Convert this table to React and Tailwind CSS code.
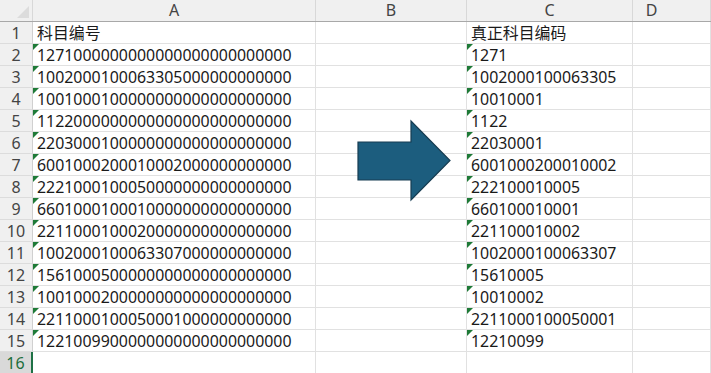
import React from "react";

const rowsA = [
  "科目编号",
  "1271000000000000000000000000",
  "1002000100063305000000000000",
  "1001000100000000000000000000",
  "1122000000000000000000000000",
  "2203000100000000000000000000",
  "6001000200010002000000000000",
  "2221000100050000000000000000",
  "6601000100010000000000000000",
  "2211000100020000000000000000",
  "1002000100063307000000000000",
  "1561000500000000000000000000",
  "1001000200000000000000000000",
  "2211000100050001000000000000",
  "1221009900000000000000000000",
  "",
];

const rowsC = [
  "真正科目编码",
  "1271",
  "1002000100063305",
  "10010001",
  "1122",
  "22030001",
  "6001000200010002",
  "222100010005",
  "660100010001",
  "221100010002",
  "1002000100063307",
  "15610005",
  "10010002",
  "2211000100050001",
  "12210099",
  "",
];

const cols = "grid-cols-[33px_283px_151px_166px_1fr]";

function Cell({ text, flag }) {
  return (
    <div className="relative h-[22px] border-r border-b border-[#e1e1e1] pl-[4px] leading-[22px] whitespace-nowrap overflow-hidden text-[#1a1a1a]">
      {flag && (
        <span className="absolute left-0 top-0 w-0 h-0 border-t-[6px] border-r-[6px] border-t-[#1e7a37] border-r-transparent" />
      )}
      {text}
    </div>
  );
}

export default function App() {
  return (
    <div
      className="relative w-[711px] h-[373px] overflow-hidden bg-white"
      style={{ fontFamily: '"Noto Sans", "Noto Sans CJK SC", sans-serif' }}
    >
      <div className={`grid ${cols} h-[22px] bg-[#f0f0f0] border-b border-[#a8a8a8] text-[16px] text-[#444] leading-[21px]`}>
        <div className="relative border-r border-[#d8d8d8]">
          <svg className="absolute right-[3px] bottom-[3px]" width="12" height="12">
            <polygon points="12,0 12,12 0,12" fill="#dcdcdc" />
          </svg>
        </div>
        <div className="text-center border-r border-[#d8d8d8]">A</div>
        <div className="text-center border-r border-[#d8d8d8]">B</div>
        <div className="text-center border-r border-[#d8d8d8]">C</div>
        <div className="text-center border-r border-[#d8d8d8] pr-[40px]">D</div>
      </div>
      {rowsA.map((a, i) => {
        const n = i + 1;
        const active = n === 16;
        const flag = n > 1 && n < 16;
        return (
          <div key={n} className={`grid ${cols} text-[15.9px]`}>
            <div
              className={`h-[22px] border-b text-center leading-[22px] text-[16px] ${
                active
                  ? "bg-[#d9d9d9] text-[#1e6e3c] border-b-[#d0d0d0] border-r-2 border-r-[#1e7145]"
                  : "bg-[#f0f0f0] text-[#444] border-b-[#dcdcdc] border-r border-r-[#d0d0d0]"
              }`}
            >
              {n}
            </div>
            <Cell text={a} flag={flag} />
            <Cell text="" />
            <Cell text={rowsC[i]} flag={flag} />
            <Cell text="" />
          </div>
        );
      })}
      <svg className="absolute left-0 top-0" width="711" height="373">
        <polygon
          points="358,142 411,142 411,121 450,160.5 411,200 411,180 358,180"
          fill="#1c5d7e"
          stroke="#173d52"
          strokeWidth="1.2"
        />
      </svg>
    </div>
  );
}
